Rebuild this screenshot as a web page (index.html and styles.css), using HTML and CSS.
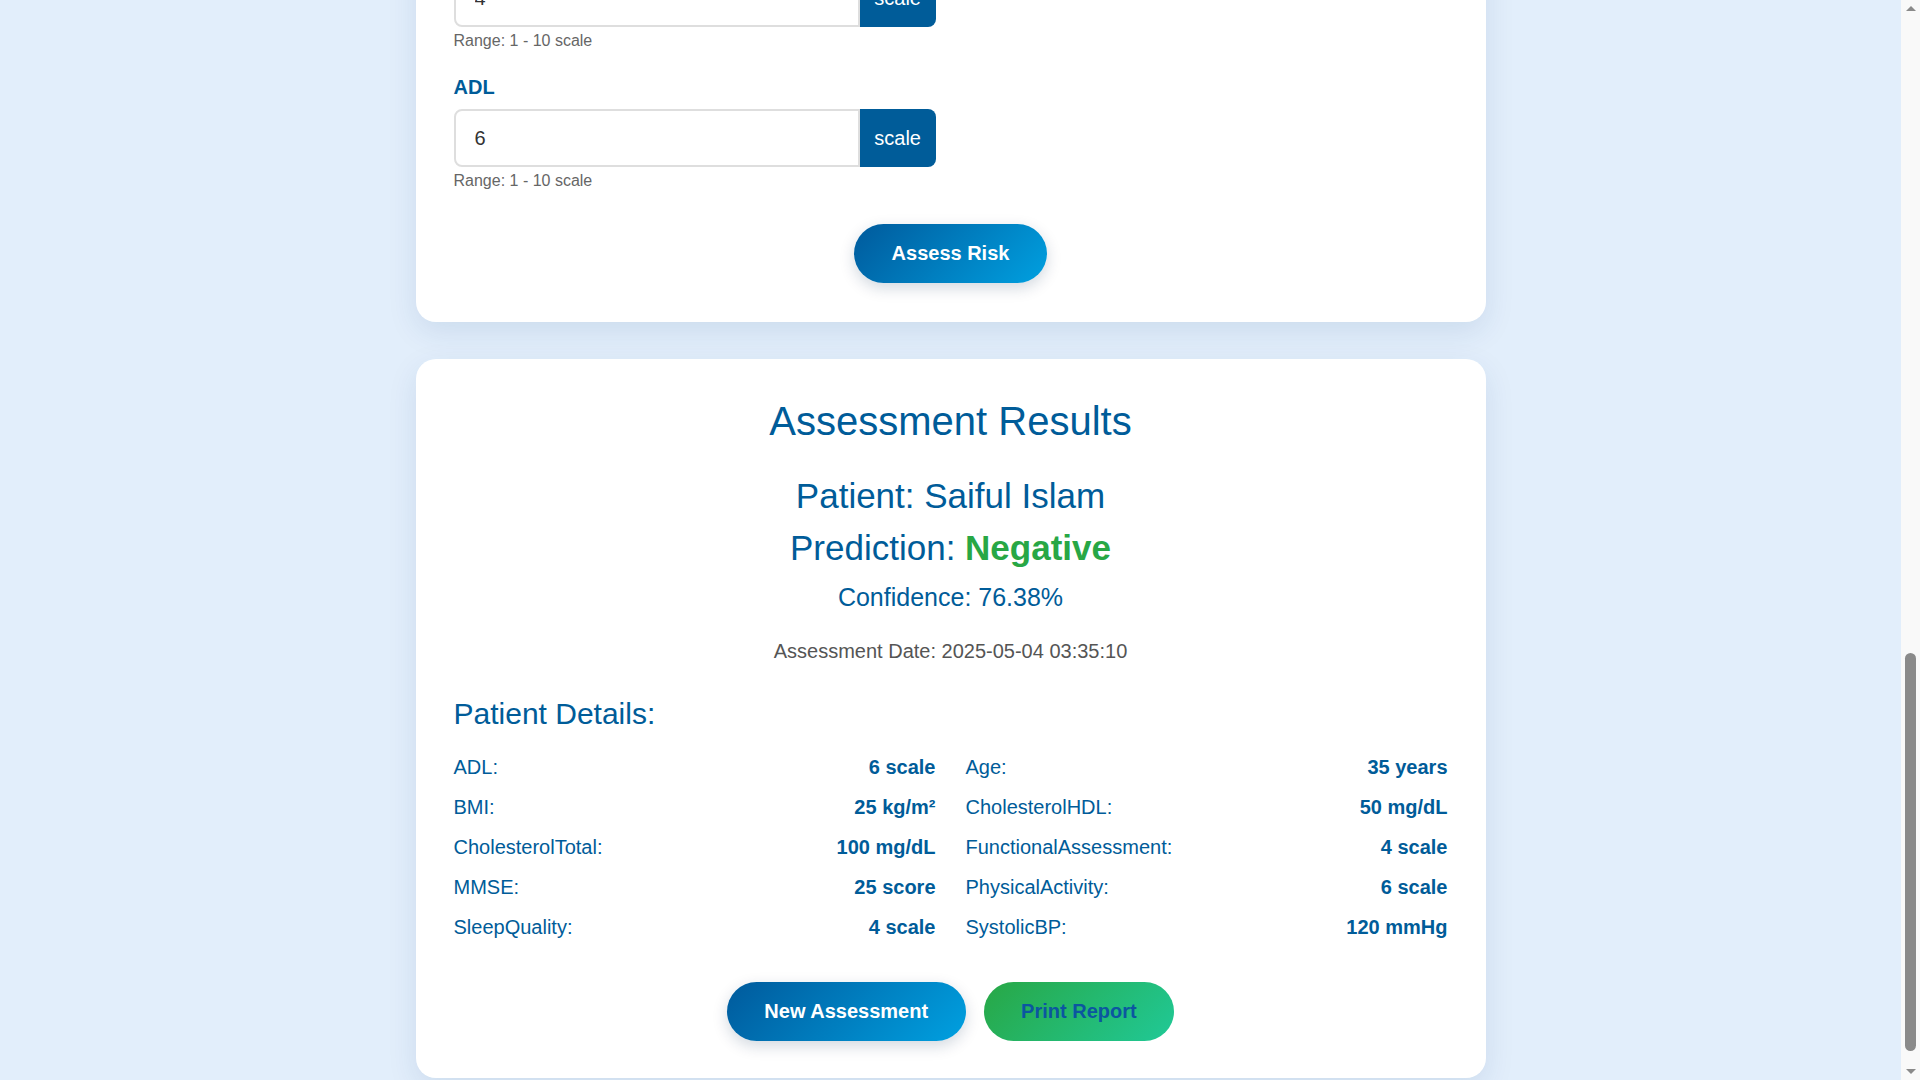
FILE: index.html
```html
<!DOCTYPE html>
<html lang="en">
<head>
<meta charset="utf-8">
<title>Alzheimer's Risk Assessment</title>
<link rel="stylesheet" href="styles.css">
</head>
<body>
<div class="viewport">
  <div class="container">
    <header class="page-header">
      <h1>Alzheimer's Disease Risk Assessment</h1>
      <p>Enter the patient's clinical information to estimate the risk.</p>
    </header>

    <section class="card form-card">
      <h2 class="card-title">Patient Information</h2>
      <form class="assess-form">
        <div class="form-group">
          <label>Patient Name</label>
          <div class="input-group"><input class="field-input" type="text" value="Saiful Islam"></div>
          <span class="hint">Full name of the patient</span>
        </div>
        <div class="form-group">
          <label>Age</label>
          <div class="input-group"><input class="field-input" type="number" value="35"><span class="unit">years</span></div>
          <span class="hint">Range: 18 - 100 years</span>
        </div>
        <div class="form-group">
          <label>BMI</label>
          <div class="input-group"><input class="field-input" type="number" value="25"><span class="unit">kg/m²</span></div>
          <span class="hint">Range: 15 - 40 kg/m²</span>
        </div>
        <div class="form-group">
          <label>PhysicalActivity</label>
          <div class="input-group"><input class="field-input" type="number" value="6"><span class="unit">scale</span></div>
          <span class="hint">Range: 1 - 10 scale</span>
        </div>
        <div class="form-group">
          <label>SleepQuality</label>
          <div class="input-group"><input class="field-input" type="number" value="4"><span class="unit">scale</span></div>
          <span class="hint">Range: 1 - 10 scale</span>
        </div>
        <div class="form-group">
          <label>SystolicBP</label>
          <div class="input-group"><input class="field-input" type="number" value="120"><span class="unit">mmHg</span></div>
          <span class="hint">Range: 90 - 180 mmHg</span>
        </div>
        <div class="form-group">
          <label>CholesterolTotal</label>
          <div class="input-group"><input class="field-input" type="number" value="100"><span class="unit">mg/dL</span></div>
          <span class="hint">Range: 100 - 300 mg/dL</span>
        </div>
        <div class="form-group">
          <label>CholesterolHDL</label>
          <div class="input-group"><input class="field-input" type="number" value="50"><span class="unit">mg/dL</span></div>
          <span class="hint">Range: 20 - 100 mg/dL</span>
        </div>
        <div class="form-group">
          <label>MMSE</label>
          <div class="input-group"><input class="field-input" type="number" value="25"><span class="unit">score</span></div>
          <span class="hint">Range: 0 - 30 score</span>
        </div>
        <div class="form-group">
          <label>FunctionalAssessment</label>
          <div class="input-group"><input class="field-input" type="number" value="4"><span class="unit">scale</span></div>
          <span class="hint">Range: 1 - 10 scale</span>
        </div>
        <div class="form-group">
          <label>ADL</label>
          <div class="input-group"><input class="field-input" type="number" value="6"><span class="unit">scale</span></div>
          <span class="hint">Range: 1 - 10 scale</span>
        </div>
        <div class="form-actions">
          <button class="btn btn-primary" type="button">Assess Risk</button>
        </div>
      </form>
    </section>

    <section class="card results-card">
      <h2 class="results-title">Assessment Results</h2>
      <h3 class="patient-line">Patient: Saiful Islam</h3>
      <h3 class="patient-line prediction">Prediction: <span class="negative">Negative</span></h3>
      <p class="confidence">Confidence: 76.38%</p>
      <p class="assess-date">Assessment Date: 2025-05-04 03:35:10</p>
      <h3 class="details-title">Patient Details:</h3>
      <div class="details-grid">
        <div class="detail-item"><span>ADL:</span><span class="detail-value">6 scale</span></div>
        <div class="detail-item"><span>Age:</span><span class="detail-value">35 years</span></div>
        <div class="detail-item"><span>BMI:</span><span class="detail-value">25 kg/m²</span></div>
        <div class="detail-item"><span>CholesterolHDL:</span><span class="detail-value">50 mg/dL</span></div>
        <div class="detail-item"><span>CholesterolTotal:</span><span class="detail-value">100 mg/dL</span></div>
        <div class="detail-item"><span>FunctionalAssessment:</span><span class="detail-value">4 scale</span></div>
        <div class="detail-item"><span>MMSE:</span><span class="detail-value">25 score</span></div>
        <div class="detail-item"><span>PhysicalActivity:</span><span class="detail-value">6 scale</span></div>
        <div class="detail-item"><span>SleepQuality:</span><span class="detail-value">4 scale</span></div>
        <div class="detail-item"><span>SystolicBP:</span><span class="detail-value">120 mmHg</span></div>
      </div>
      <div class="result-actions">
        <button class="btn btn-primary" type="button">New Assessment</button>
        <button class="btn btn-success" type="button">Print Report</button>
      </div>
    </section>
  </div>
</div>

<div class="scrollbar" aria-hidden="true">
  <div class="sb-button"><span class="arrow arrow-up"></span></div>
  <div class="sb-track">
    <div class="sb-space"></div>
    <div class="sb-thumb"></div>
  </div>
  <div class="sb-button"><span class="arrow arrow-down"></span></div>
</div>
</body>
</html>
```
FILE: styles.css
```css
* {
  box-sizing: border-box;
}

html,
body {
  margin: 0;
  padding: 0;
  height: 100%;
}

body {
  font-family: "Liberation Sans", Arial, sans-serif;
  background: #e2eefb;
  color: #333;
  display: flex;
  overflow: hidden;
}

/* Visible window: page is shown scrolled to its end */
.viewport {
  flex: 1;
  height: 100vh;
  overflow: hidden;
  display: flex;
  flex-direction: column;
  justify-content: flex-end;
}

.container {
  flex-shrink: 0;
  width: 100%;
  max-width: 1070px;
  margin: 0 auto;
  padding: 30px 0 2px;
}

.page-header {
  text-align: center;
  margin-bottom: 30px;
  color: #005c99;
}

.page-header h1 {
  font-size: 40px;
  margin: 0 0 10px;
}

.page-header p {
  font-size: 18px;
  margin: 0;
  color: #555;
}

.card {
  background: #fff;
  border-radius: 20px;
  box-shadow: 0 10px 30px rgba(0, 60, 120, 0.1);
  padding: 40px 38px;
}

.form-card {
  margin-bottom: 37px;
  padding-bottom: 39px;
}

.card-title {
  font-size: 30px;
  font-weight: normal;
  color: #005c99;
  margin: 0 0 30px;
}

.assess-form {
  display: flex;
  flex-direction: column;
}

.form-group {
  width: 482px;
  margin-bottom: 26px;
}

.form-group label {
  display: block;
  font-size: 20px;
  line-height: 23px;
  font-weight: bold;
  color: #005c99;
  margin-bottom: 10px;
}

.input-group {
  display: flex;
  width: 100%;
}

.field-input {
  flex: 1;
  min-width: 0;
  font-family: "Liberation Sans", Arial, sans-serif;
  font-size: 20px;
  line-height: 24px;
  color: #333;
  padding: 15px 19px;
  border: 2px solid #dedede;
  border-radius: 8px 0 0 8px;
  background: #fff;
  outline: none;
}

.field-input[type="text"] {
  border-radius: 8px;
}

.field-input::-webkit-inner-spin-button,
.field-input::-webkit-outer-spin-button {
  -webkit-appearance: none;
  margin: 0;
}

.unit {
  display: flex;
  align-items: center;
  padding: 0 14.5px;
  background: #005c99;
  color: #fff;
  font-size: 20px;
  border-radius: 0 8px 8px 0;
}

.hint {
  display: block;
  margin-top: 5px;
  font-size: 16px;
  line-height: 18px;
  color: #666;
}

.form-actions {
  display: flex;
  justify-content: center;
  margin-top: 8px;
}

.btn {
  border: none;
  border-radius: 50px;
  padding: 18px 37.5px;
  font-family: "Liberation Sans", Arial, sans-serif;
  font-size: 20px;
  line-height: 23px;
  font-weight: bold;
  color: #fff;
  cursor: pointer;
}

.btn-primary {
  background: linear-gradient(135deg, #005a9c 0%, #00a0e0 100%);
  box-shadow: 0 5px 15px rgba(0, 40, 80, 0.18);
}

.btn-success {
  background: linear-gradient(135deg, #28a745 0%, #20c997 100%);
  color: #0b56a0;
}

.results-card {
  text-align: center;
  padding-top: 39px;
  padding-bottom: 37px;
  color: #005c99;
}

.results-title {
  font-size: 40px;
  line-height: 46px;
  font-weight: normal;
  margin: 0;
}

.patient-line {
  font-size: 35px;
  line-height: 40px;
  font-weight: normal;
  margin: 32px 0 0;
}

.prediction {
  margin-top: 12px;
}

.negative {
  color: #28a745;
  font-weight: bold;
}

.confidence {
  font-size: 25px;
  line-height: 29px;
  margin: 15px 0 0;
}

.assess-date {
  font-size: 20px;
  line-height: 23px;
  margin: 28px 0 0;
  color: #555;
}

.details-title {
  text-align: left;
  font-size: 30px;
  line-height: 35px;
  font-weight: normal;
  margin: 33px 0 0;
}

.details-grid {
  display: grid;
  grid-template-columns: 1fr 1fr;
  column-gap: 30px;
  margin-top: 16px;
  text-align: left;
}

.detail-item {
  display: flex;
  justify-content: space-between;
  padding: 8.5px 0;
  font-size: 20px;
  line-height: 23px;
}

.detail-value {
  font-weight: bold;
}

.result-actions {
  display: flex;
  justify-content: center;
  gap: 18px;
  margin-top: 35px;
}

/* Window scrollbar, scrolled to the end */
.scrollbar {
  flex: 0 0 19px;
  height: 100vh;
  background: #f9f9f9;
  display: flex;
  flex-direction: column;
}

.sb-button {
  flex: 0 0 17px;
  display: flex;
  align-items: center;
  justify-content: center;
}

.arrow {
  width: 0;
  height: 0;
  border-left: 5px solid transparent;
  border-right: 5px solid transparent;
}

.arrow-up {
  border-bottom: 5px solid #8a8a8a;
}

.arrow-down {
  border-top: 5px solid #8a8a8a;
}

.sb-track {
  flex: 1;
  display: flex;
  flex-direction: column;
  align-items: center;
  padding: 2px 0 12px;
}

.sb-space {
  flex: 1;
}

.sb-thumb {
  width: 11px;
  height: 398px;
  border-radius: 6px;
  background: #8a8a8a;
}
```
